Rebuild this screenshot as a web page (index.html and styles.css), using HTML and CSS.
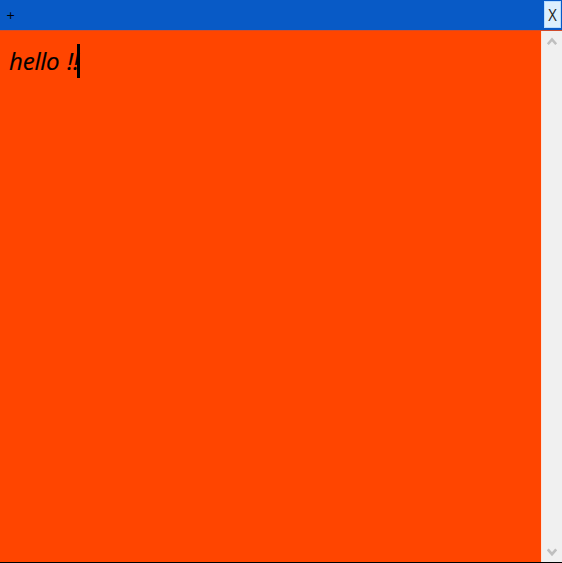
FILE: index.html
```html
<!DOCTYPE html>
<html lang="en">
<head>
<meta charset="utf-8">
<title>Note</title>
<link rel="stylesheet" href="styles.css">
</head>
<body>
<div class="note">
  <header class="titlebar">
    <span class="add">+</span>
    <button class="close"><span class="close-label">X</span></button>
  </header>
  <main class="body">
    <div class="text"><span class="line">hello !!<i class="caret"></i></span></div>
    <div class="scrollbar">
      <svg class="arrow" width="10" height="9" viewBox="0 0 10 9"><path d="M.8 7.2 5 2.4 9.2 7.2"/></svg>
      <svg class="arrow" width="10" height="9" viewBox="0 0 10 9"><path d="M.8 1.4 5 6.2 9.2 1.4"/></svg>
    </div>
  </main>
</div>
</body>
</html>
```

FILE: styles.css
```css
* { box-sizing: border-box; }
body { margin: 0; }
.note {
  height: 563px;
  display: flex;
  flex-direction: column;
  border-bottom: 1px solid #000;
  background: #ff4500;
}
.titlebar {
  height: 30px;
  flex: none;
  display: flex;
  justify-content: space-between;
  align-items: flex-start;
  padding: 1px 1px 0 6px;
  background: #085ac6;
}
.add {
  font: 11px/30px "DejaVu Sans", sans-serif;
  color: #000;
}
.close {
  width: 17px;
  height: 27px;
  padding: 0;
  border: 1px solid #b5dcff;
  background: #dceffd;
  color: #222;
  font: 16px/26px "Open Sans", sans-serif;
  text-align: center;
}
.close-label {
  display: block;
  transform: scaleX(.92);
}
.body {
  flex: 1;
  display: flex;
  border-top: 1px solid #d04c2c;
}
.text {
  flex: 1;
  padding: 13px 0 0 9px;
}
.line {
  position: relative;
  display: inline-block;
  width: 71px;
  height: 34px;
  font: italic 500 24px/34px "Open Sans", sans-serif;
  letter-spacing: -.2px;
  word-spacing: 1.5px;
  -webkit-text-stroke: .2px #000;
  white-space: nowrap;
  color: #000;
}
.caret {
  position: absolute;
  right: 0;
  top: 0;
  width: 3px;
  height: 34px;
  background: #000;
}
.scrollbar {
  width: 21px;
  display: flex;
  flex-direction: column;
  justify-content: space-between;
  align-items: center;
  padding: 6px 0 5px;
  border-left: 1px solid #fbe3da;
  background: #f0f0f0;
}
.arrow path {
  fill: none;
  stroke: #bfbfbf;
  stroke-width: 2.6;
}
```
